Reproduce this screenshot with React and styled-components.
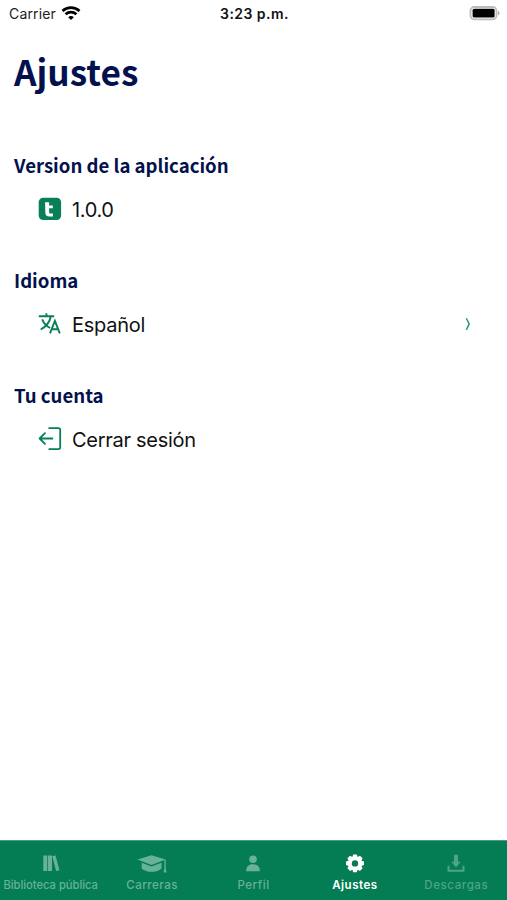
import React from "react";
import styled, { createGlobalStyle } from "styled-components";

const GlobalStyle = createGlobalStyle`
  * { box-sizing: border-box; }
  body { margin: 0; background: #fff; }
`;

const Screen = styled.div`
  display: flex;
  flex-direction: column;
  height: 900px;
  background: #fff;
  color: #111;
  font-family: Inter, "Liberation Sans", sans-serif;
`;

const StatusBar = styled.header`
  display: grid;
  grid-template-columns: 1fr auto 1fr;
  align-items: center;
  height: 27px;
  padding: 0 7px 0 9px;
`;

const Carrier = styled.div`
  display: flex;
  align-items: center;
  gap: 5px;
  font-size: 14px;
  letter-spacing: 0.15px;
  color: #222;
`;

const Clock = styled.div`
  font-size: 14px;
  font-weight: 600;
  letter-spacing: 0.45px;
`;

const BatterySlot = styled.div`
  display: flex;
  justify-content: flex-end;
`;

const Content = styled.main`
  flex: 1;
  padding: 0 14px;
`;

const Title = styled.h1`
  margin: 17px 0 0;
  font: 700 35.2px/54px "Noto Sans CJK JP", sans-serif;
  color: #03114d;
`;

const Section = styled.section`
  height: 115px;
  &:first-of-type { margin-top: 52px; }
`;

const SectionTitle = styled.h2`
  margin: 0;
  font: 700 18.6px/29px "Noto Sans CJK JP", sans-serif;
  color: #03114d;
`;

const Row = styled.div`
  display: flex;
  align-items: center;
  height: 32px;
  margin-top: 14px;
  padding: 0 20px 0 24px;
`;

const RowIcon = styled.span`
  display: flex;
  width: 24px;
  height: 24px;
  margin-right: 10px;
  color: #087f57;
`;

const RowLabel = styled.span`
  flex: 1;
  padding-top: 2px;
  font-size: 20px;
  line-height: 28px;
  letter-spacing: ${(p) => p.$spacing || 0}px;
`;

const TabBar = styled.nav`
  display: grid;
  grid-template-columns: repeat(5, 1fr);
  height: 60px;
  background: #047c54;
  border-top: 1px solid #4a9b7c;
`;

const Tab = styled.div`
  display: flex;
  flex-direction: column;
  align-items: center;
  min-width: 0;
  padding-top: 11px;
  color: ${(p) => (p.$active ? "#fff" : p.$dim ? "#4ea487" : "#68b297")};
`;

const TabIcon = styled.span`
  display: flex;
  height: 24px;
`;

const TabLabel = styled.span`
  margin-top: 1px;
  font-size: ${(p) => p.$size || 11.5}px;
  line-height: 16px;
  white-space: nowrap;
  font-weight: ${(p) => (p.$active ? 600 : 500)};
  letter-spacing: ${(p) => p.$spacing}px;
`;

const WifiIcon = () => (
  <svg width="20" height="15" viewBox="0 0 20 15" fill="none" stroke="#000" strokeWidth="2.7">
    <path d="M1.5 4.9C6.3.5 13.7.5 18.5 4.9M4.6 8.3c3-2.8 7.8-2.8 10.8 0" />
    <path d="M10 14 7.2 11.2c1.6-1.5 4-1.5 5.6 0z" fill="#000" stroke="none" />
  </svg>
);

const BatteryIcon = () => (
  <svg width="31" height="15" viewBox="0 0 31 15">
    <rect x="1.5" y="1" width="26" height="12.4" rx="3.8" fill="#fff" stroke="#bcbcbc" strokeWidth="1.8" />
    <rect x="3.6" y="2.8" width="22" height="8.8" rx="1.5" fill="#000" />
    <path d="M29 5.1c2 .5 2 3.7 0 4.2z" fill="#aaa" />
  </svg>
);

const AppIcon = () => (
  <svg width="24" height="24" viewBox="0 0 24 24">
    <rect x=".7" y=".7" width="22.4" height="22.4" rx="4.5" fill="#087f57" />
    <path d="M7.1 5.3h4v3.1h3.7v2.9h-3.7v3.8c0 1.1.5 1.5 1.5 1.5h2.3v2.8h-3.3c-3 0-4.3-1.4-4.3-4z" fill="#fff" />
  </svg>
);

const TranslateIcon = () => (
  <svg width="24" height="24" viewBox="0 0 24 24" fill="none" stroke="currentColor" strokeWidth="1.9">
    <path d="M.8 4.3h15.4M8.4 1.3v3M4.1 7.3c1.8 4.2 4.5 6.8 8 8.7M12.8 4.5C11.8 9.8 8.4 14.4 2.7 17.5" />
    <path d="m12 21.3 4.9-12.5 4.9 12.5M13.5 17.3h6.8" />
  </svg>
);

const LogoutIcon = () => (
  <svg width="24" height="24" viewBox="0 0 24 24" fill="none" stroke="currentColor" strokeWidth="1.8" strokeLinecap="round" strokeLinejoin="round">
    <path d="M11.2 1.2h9.2c1.1 0 1.8.7 1.8 1.8v17.3c0 1.1-.7 1.8-1.8 1.8h-9.2" />
    <path d="M14.4 11.5H1.6M7 6.2l-5.4 5.3L7 16.8" />
  </svg>
);

const ChevronIcon = () => (
  <svg width="8" height="16" viewBox="0 0 8 16" fill="none" stroke="#23906b" strokeWidth="1.4">
    <path d="m1.3 2.2 2.9 5.7-2.9 6.1" />
  </svg>
);

const BooksIcon = () => (
  <svg width="18" height="24" viewBox="0 0 18 24" fill="currentColor">
    <path d="M1.3 3.5h4V19h-4zM6 3.5h4V19H6zM10.3 4.1l3.2-.6 4 14.7-3.4.9z" />
  </svg>
);

const GraduationIcon = () => (
  <svg width="30" height="24" viewBox="0 0 30 24" fill="currentColor">
    <path d="M14.5 3.2 28.7 7.5 14.5 12.9.5 7.5z" />
    <path d="m4.7 10.7 9.8 3.7 10-3.7v5.7c-4.8 4.5-15 4.5-19.8 0z" />
    <path d="M27.4 7.7h1.3v8l.8 4.7h-2.8l.7-4.7z" />
  </svg>
);

const PersonIcon = () => (
  <svg width="18" height="24" viewBox="0 0 18 24" fill="currentColor">
    <circle cx="9" cy="7.2" r="3.8" />
    <path d="M2.2 19.3V18c0-7.7 13.6-7.7 13.6 0v1.3z" />
  </svg>
);

const GearIcon = () => (
  <svg width="20" height="24" viewBox="0 0 20 24" fill="currentColor">
    <path
      fillRule="evenodd"
      d="M8.2 2.4h3.6l.8 2.5 2.4-1.2 2.6 2.6-1.2 2.4 2.6.8v3.6l-2.6.8 1.2 2.4-2.6 2.6-2.4-1.2-.8 2.6H8.2l-.8-2.6L5 18.9l-2.6-2.6 1.2-2.4-2.6-.8V9.5l2.6-.8-1.2-2.4L5 3.7l2.4 1.2zM10 8.2a3.2 3.2 0 1 0 0 6.4 3.2 3.2 0 0 0 0-6.4z"
    />
  </svg>
);

const DownloadIcon = () => (
  <svg width="20" height="24" viewBox="0 0 20 24" fill="currentColor">
    <path d="M8 2.7h4v7h2.8L10 15.5 5.2 9.7H8z" />
    <path d="M1.5 13.8h2v4h13v-4h2v6h-17z" />
  </svg>
);

const sections = [
  { title: "Version de la aplicación", label: "1.0.0", labelSpacing: -0.35, Icon: AppIcon },
  { title: "Idioma", label: "Español", labelSpacing: -0.25, Icon: TranslateIcon, opens: true },
  { title: "Tu cuenta", label: "Cerrar sesión", labelSpacing: -0.28, Icon: LogoutIcon },
];

const tabs = [
  { label: "Biblioteca pública", spacing: -0.02, size: 11.2, Icon: BooksIcon },
  { label: "Carreras", spacing: 0.5, Icon: GraduationIcon },
  { label: "Perfil", spacing: 0.55, Icon: PersonIcon },
  { label: "Ajustes", spacing: 0.5, Icon: GearIcon, active: true },
  { label: "Descargas", spacing: 0.6, Icon: DownloadIcon, dim: true },
];

export default function App() {
  return (
    <Screen>
      <GlobalStyle />
      <StatusBar>
        <Carrier>Carrier <WifiIcon /></Carrier>
        <Clock>3:23 p.m.</Clock>
        <BatterySlot><BatteryIcon /></BatterySlot>
      </StatusBar>
      <Content>
        <Title>Ajustes</Title>
        {sections.map(({ title, label, labelSpacing, Icon, opens }) => (
          <Section key={title}>
            <SectionTitle>{title}</SectionTitle>
            <Row>
              <RowIcon><Icon /></RowIcon>
              <RowLabel $spacing={labelSpacing}>{label}</RowLabel>
              {opens && <ChevronIcon />}
            </Row>
          </Section>
        ))}
      </Content>
      <TabBar>
        {tabs.map(({ label, spacing, size, Icon, active, dim }) => (
          <Tab key={label} $active={active} $dim={dim}>
            <TabIcon><Icon /></TabIcon>
            <TabLabel $active={active} $spacing={spacing} $size={size}>{label}</TabLabel>
          </Tab>
        ))}
      </TabBar>
    </Screen>
  );
}
